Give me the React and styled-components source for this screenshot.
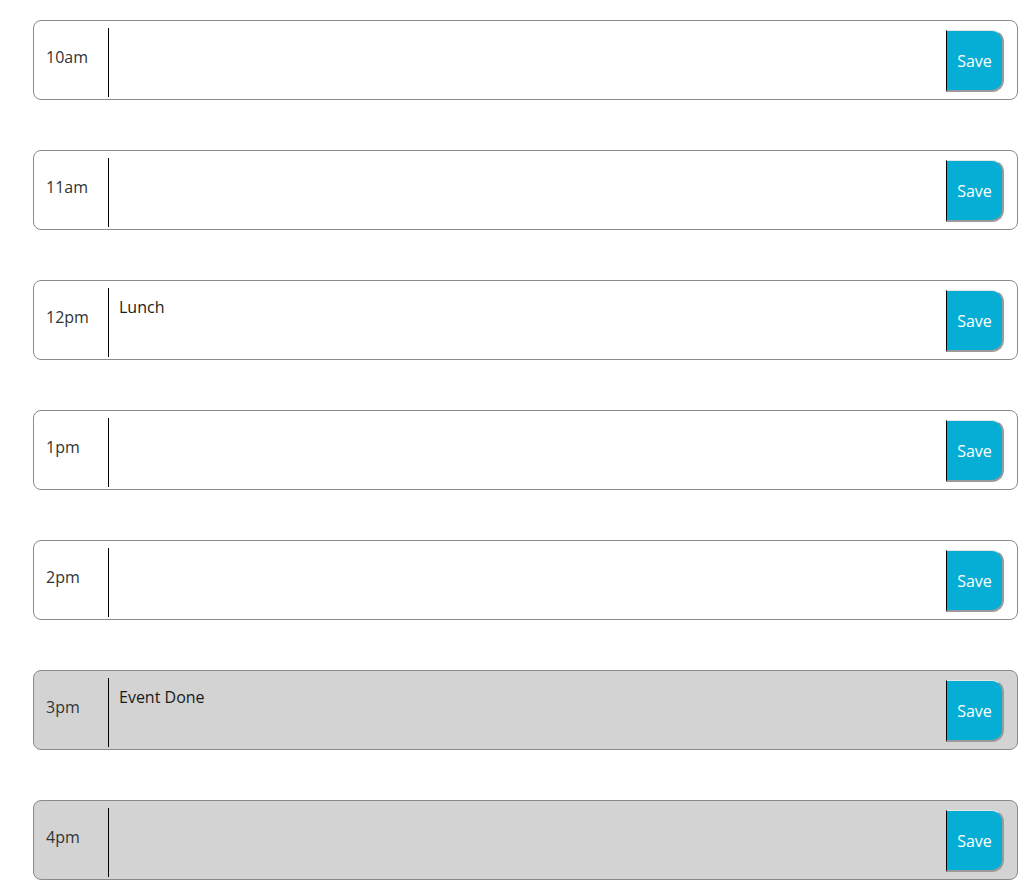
import React from "react"
import styled, { createGlobalStyle } from "styled-components"

const GlobalStyle = createGlobalStyle`
  body {
    margin: 0;
    background: #fff;
    font-family: "Open Sans", "Liberation Sans", sans-serif;
  }
`;

const Schedule = styled.div`
  display: flex;
  flex-direction: column;
  gap: 50px;
  padding: 20px 0 0 33px;
  width: 985px;
`;

const Row = styled.div`
  box-sizing: border-box;
  display: flex;
  align-items: flex-start;
  height: 80px;
  padding: 7px 13px 0 0;
  border: 1px solid #8a8a8a;
  border-radius: 8px;
  background: ${p => (p.past ? "#d3d3d3" : "#fff")};
`;

const Hour = styled.div`
  box-sizing: border-box;
  width: 74px;
  flex: none;
  padding: 17px 0 0 12px;
  font-size: 16px;
  line-height: 24px;
  color: #333;
`;

const Note = styled.textarea`
  box-sizing: border-box;
  flex: 1;
  height: 69px;
  margin: 0;
  padding: 7px 10px;
  border: none;
  border-left: 1px solid #000;
  border-radius: 0;
  background: transparent;
  resize: none;
  outline: none;
  font-family: "Open Sans", "Liberation Sans", sans-serif;
  font-size: 16px;
  line-height: 24px;
  color: #1a1a1a;
`;

const SaveBtn = styled.button`
  box-sizing: border-box;
  flex: none;
  width: 58px;
  height: 62px;
  margin-top: 2px;
  padding: 0;
  border: none;
  border-left: 1px solid #000;
  border-top: 1px solid #e6e6e6;
  border-right: 2px solid #9a9a9a;
  border-bottom: 2px solid #9a9a9a;
  border-radius: 0 12px 12px 0;
  background: #06aed5;
  color: #fff;
  font-family: "Open Sans", "Liberation Sans", sans-serif;
  font-size: 16px;
  cursor: pointer;
`;

const hours = [
  { label: "10am", text: "" },
  { label: "11am", text: "" },
  { label: "12pm", text: "Lunch" },
  { label: "1pm", text: "" },
  { label: "2pm", text: "" },
  { label: "3pm", text: "Event Done", past: true },
  { label: "4pm", text: "", past: true },
]

function App () {
  return (
    <>
      <GlobalStyle />
      <Schedule>
        {hours.map(h => (
          <Row key={h.label} past={h.past}>
            <Hour>{h.label}</Hour>
            <Note defaultValue={h.text} />
            <SaveBtn>Save</SaveBtn>
          </Row>
        ))}
      </Schedule>
    </>
  )
}

export default App
